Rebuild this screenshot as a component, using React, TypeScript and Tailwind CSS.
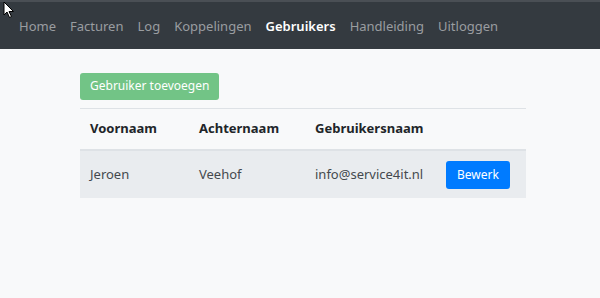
const NAV_ITEMS = ["Home", "Facturen", "Log", "Koppelingen", "Gebruikers", "Handleiding", "Uitloggen"];

const ACTIVE = "Gebruikers";

type User = {
  voornaam: string;
  achternaam: string;
  gebruikersnaam: string;
};

const USERS: User[] = [{ voornaam: "Jeroen", achternaam: "Veehof", gebruikersnaam: "info@service4it.nl" }];

function Cursor() {
  return (
    <svg className="absolute left-[3px] top-[1px]" width="12" height="18" viewBox="0 0 12 18">
      <path d="M1 1 L1 14 L4 11 L6.5 16.5 L8.5 15.5 L6 10.5 L10.5 10.5 Z" fill="#fff" stroke="#000" strokeWidth="1" />
    </svg>
  );
}

export default function App() {
  return (
    <div className="relative h-[298px] w-[600px] bg-[#f8f9fa] font-['Noto_Sans',sans-serif]">
      <nav className="flex h-[49px] items-center border-t-2 border-[#4a4f55] bg-[#343a40] px-[12px] pt-[3px] text-[13px]">
        {NAV_ITEMS.map((item) => (
          <a
            key={item}
            className={
              item === ACTIVE
                ? "px-[7px] font-semibold text-white"
                : "px-[7px] text-[#9a9da0]"
            }
          >
            {item}
          </a>
        ))}
      </nav>
      <Cursor />

      <main className="ml-[80px] w-[446px] pt-[23px]">
        <button className="rounded-[3px] bg-[#72c486] px-[10px] py-[4.5px] text-[12px] text-white">
          Gebruiker toevoegen
        </button>

        <table className="mt-[8px] w-full border-collapse text-left text-[13px]">
          <thead>
            <tr className="h-[42px] border-t border-b-2 border-[#dee2e6] text-[#212529]">
              <th className="w-[109px] pl-[10px] font-bold">Voornaam</th>
              <th className="w-[116px] pl-[10px] font-bold">Achternaam</th>
              <th className="w-[131px] pl-[10px] font-bold">Gebruikersnaam</th>
              <th></th>
            </tr>
          </thead>
          <tbody>
            {USERS.map((user) => (
              <tr key={user.gebruikersnaam} className="h-[48px] bg-[#e9ecef] text-[#44494e]">
                <td className="pl-[10px]">{user.voornaam}</td>
                <td className="pl-[10px]">{user.achternaam}</td>
                <td className="pl-[10px]">{user.gebruikersnaam}</td>
                <td className="pl-[10px]">
                  <button className="rounded-[3px] bg-[#007bff] px-[11px] py-[5px] text-[12px] text-white">
                    Bewerk
                  </button>
                </td>
              </tr>
            ))}
          </tbody>
        </table>
      </main>
    </div>
  );
}
